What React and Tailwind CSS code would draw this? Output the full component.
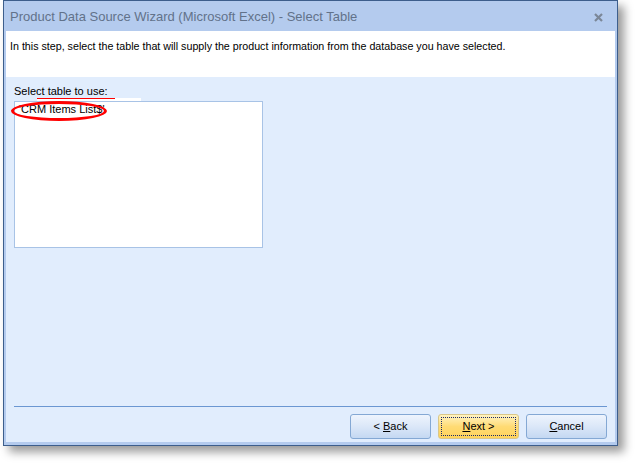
export default function App() {
  return (
    <div className="w-[635px] h-[463px] bg-white font-['Liberation_Sans',Arial,sans-serif]">
      <div className="ml-[3px] w-[615px] h-[446px] border border-[#3d5e8c] bg-[#b4cbee] flex flex-col shadow-[6px_6px_9px_rgba(0,0,0,0.4)]">
        {/* title bar */}
        <div className="h-[30px] flex items-center justify-between pl-[6px] pr-[14px] shrink-0">
          <span className="text-[13px] text-[#62728a] pt-[2px]">
            Product Data Source Wizard (Microsoft Excel) - Select Table
          </span>
          <svg width="9" height="9" viewBox="0 0 9 9" className="mt-[2px]">
            <path d="M1 1L8 8M8 1L1 8" stroke="#7b8798" strokeWidth="2.2" />
          </svg>
        </div>

        <div className="flex-1 mx-[2px] mb-[3px] flex flex-col bg-[#e1edfd]">
          {/* header */}
          <div className="h-[46px] bg-white px-[4px] pt-[7px] text-[10.7px] text-black shrink-0">
            In this step, select the table that will supply the product information from the database you have selected.
          </div>

          {/* body */}
          <div className="flex-1 px-[8px] pt-[8px] flex flex-col">
            <div className="text-[11px] text-black leading-[13px] relative">
              Select table to use:
              <div className="absolute left-[23px] top-[13px] w-[104px] h-[3px] bg-white" />
              <div className="absolute left-[23px] top-[13px] w-[78px] h-[1px] bg-[#ff0000]" />
            </div>
            <div className="mt-[3px] w-[249px] h-[147px] border border-[#a8c3e6] bg-white relative">
              <div className="text-[11px] text-black pl-[4px] pt-[1px] leading-[13px]">'CRM Items List$'</div>
              <div className="absolute left-[-4px] top-[-1px] w-[96px] h-[20px] rounded-[50%] border-[3px] border-[#ff0000]" />
            </div>

            <div className="flex-1" />
            <div className="h-[1px] bg-[#6b97d2] mb-[7px]" />
            <div className="flex justify-end gap-[7px] mb-[3px]">
              <button className="w-[81px] h-[25px] rounded-[3px] border border-[#84a8d4] bg-gradient-to-b from-[#eef4fd] via-[#dbe7f8] to-[#c4d8f2] text-[11px] text-black">
                &lt; <span className="underline">B</span>ack
              </button>
              <button className="w-[81px] h-[25px] rounded-[3px] border border-[#d9c78a] bg-gradient-to-b from-[#fff3c0] via-[#ffdb74] to-[#ffd35a] p-[2px]">
                <div className="w-full h-full border border-dotted border-[#1b2a6e] flex items-center justify-center text-[11px] text-black">
                  <span><span className="underline">N</span>ext &gt;</span>
                </div>
              </button>
              <button className="w-[81px] h-[25px] rounded-[3px] border border-[#84a8d4] bg-gradient-to-b from-[#eef4fd] via-[#dbe7f8] to-[#c4d8f2] text-[11px] text-black">
                <span className="underline">C</span>ancel
              </button>
            </div>
          </div>
        </div>
      </div>
    </div>
  );
}
